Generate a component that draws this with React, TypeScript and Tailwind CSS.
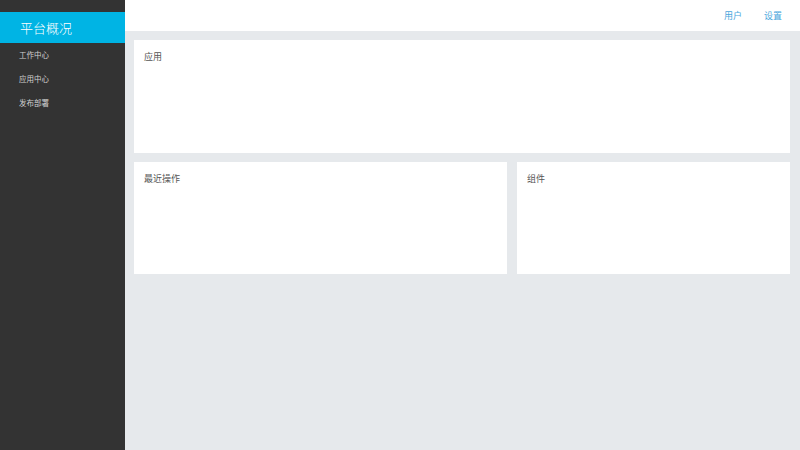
import React from 'react';

const NAV_ITEMS = ['工作中心', '应用中心', '发布部署'];

const Card: React.FC<{ title: string; className?: string }> = ({ title, className }) => (
    <div className={`bg-white px-[10px] pt-[11px] ${className ?? ''}`}>
        <h3 className="text-[9px] leading-[12px] text-[#555]">{title}</h3>
    </div>
);

export default function App() {
    return (
        <div className="flex h-[450px] w-[800px] overflow-hidden font-['Noto_Sans_CJK_SC',sans-serif]">
            <aside className="w-[125px] shrink-0 bg-[#333333] pt-[12px]">
                <div className="flex h-[31px] items-center bg-[#00b4e4] pl-[20px] text-[13px] font-light text-white">
                    平台概况
                </div>
                <ul>
                    {NAV_ITEMS.map(item => (
                        <li key={item} className="flex h-[24px] items-center pl-[19px] text-[7.5px] text-[#d0d0d0]">
                            {item}
                        </li>
                    ))}
                </ul>
            </aside>
            <div className="flex flex-1 flex-col">
                <header className="flex h-[31px] shrink-0 items-center justify-end gap-[22px] bg-white pr-[18px] text-[9px] text-[#4aa6dc]">
                    <a>用户</a>
                    <a>设置</a>
                </header>
                <main className="flex flex-1 flex-col gap-[9px] bg-[#e6e9ec] pl-[9px] pr-[10px] pt-[9px]">
                    <Card title="应用" className="h-[113px]" />
                    <div className="grid grid-cols-[373px_1fr] gap-[10px]">
                        <Card title="最近操作" className="h-[112px]" />
                        <Card title="组件" className="h-[112px]" />
                    </div>
                </main>
            </div>
        </div>
    );
}
